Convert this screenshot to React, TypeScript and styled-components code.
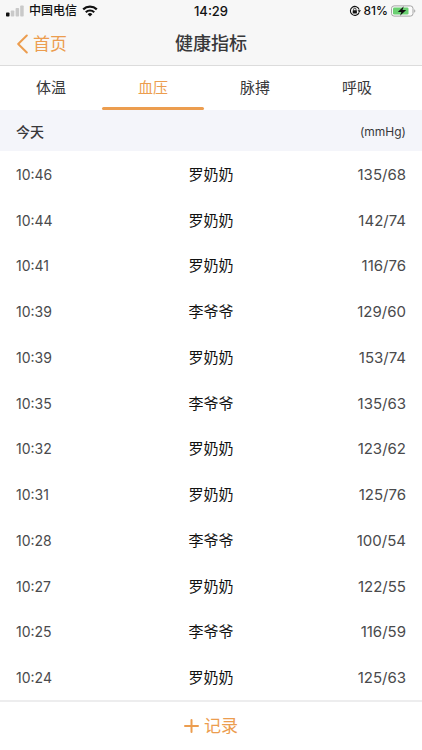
import React from "react";
import styled, { createGlobalStyle } from "styled-components";

const orange = "#ec9d4f";

const GlobalStyle = createGlobalStyle`
  * { box-sizing: border-box; }
  body {
    margin: 0;
    background: #fff;
    color: #38383a;
    font-family: Inter, "Noto Sans CJK SC", sans-serif;
  }
  button { font: inherit; border: 0; background: none; padding: 0; cursor: pointer; }
`;

const Page = styled.main`
  display: flex;
  flex-direction: column;
  min-height: 100vh;
`;

const Header = styled.header`
  background: #f7f7f7;
  border-bottom: 1px solid #dcdcdc;
`;

const StatusBar = styled.div`
  display: grid;
  grid-template-columns: 1fr auto 1fr;
  align-items: center;
  height: 21px;
  padding: 0 6px;
  color: #111;
  font-size: 12px;
  line-height: 20px;
  font-weight: 500;
`;

const StatusGroup = styled.div<{ $end?: boolean }>`
  display: flex;
  align-items: center;
  gap: ${(p) => (p.$end ? 3 : 5)}px;
  justify-content: ${(p) => (p.$end ? "flex-end" : "flex-start")};
`;

const Clock = styled.time`
  font-size: 13px;
`;

const NavBar = styled.nav`
  display: grid;
  grid-template-columns: 1fr auto 1fr;
  align-items: center;
  height: 44px;
  padding: 2px 16px 0;
`;

const BackLink = styled.a`
  display: flex;
  align-items: center;
  gap: 5px;
  color: ${orange};
  font-size: 17px;
  line-height: 24px;
  text-decoration: none;
`;

const Title = styled.h1`
  margin: 0;
  font-size: 18px;
  line-height: 24px;
  font-weight: 500;
`;

const Tabs = styled.div`
  display: grid;
  grid-template-columns: repeat(4, 1fr);
  height: 44px;
  padding-right: 14px;
`;

const Tab = styled.button<{ $active: boolean }>`
  && {
    display: grid;
    grid-template-rows: 1fr 3px;
    align-items: center;
    padding-top: 3px;
    color: ${(p) => (p.$active ? orange : "#38383a")};
    font-size: 15px;
    line-height: 24px;
  }

  &::after {
    content: "";
    height: 3px;
    border-radius: 2px;
    background: ${(p) => (p.$active ? orange : "transparent")};
  }
`;

const Readings = styled.table`
  flex: 1;
  display: grid;
  grid-template-rows: auto 1fr;
`;

const TableHead = styled.thead`
  display: grid;
  background: #f4f5fa;
`;

const TableBody = styled.tbody`
  display: grid;
  grid-auto-rows: 1fr;
`;

const Row = styled.tr`
  display: grid;
  grid-template-columns: 1fr auto 1fr;
  align-items: center;
  min-height: 41px;
  padding: 2px 16px 0;
`;

const DayCell = styled.th`
  padding: 0;
  text-align: left;
  font-size: 14px;
  line-height: 24px;
  font-weight: 500;
`;

const UnitCell = styled.th`
  grid-column: 3;
  padding: 0;
  text-align: right;
  font-size: 12px;
  line-height: 24px;
  font-weight: 400;
`;

const Cell = styled.td<{ $end?: boolean }>`
  padding: 0;
  color: #4a4a4c;
  font-size: ${(p) => (p.$end ? 15 : 14)}px;
  line-height: 24px;
  text-align: ${(p) => (p.$end ? "right" : "left")};
`;

const NameCell = styled.td`
  padding: 0;
  color: #111;
  font-size: 15px;
  line-height: 24px;
`;

const Footer = styled.footer`
  height: 50px;
  border-top: 2px solid #ededee;
`;

const RecordButton = styled.button`
  && {
    display: flex;
    align-items: center;
    justify-content: center;
    gap: 5px;
    width: 100%;
    height: 100%;
    color: ${orange};
    font-size: 17px;
    line-height: 24px;
  }
`;

const SignalIcon = () => (
  <svg width="18" height="12" viewBox="0 0 18 12" aria-hidden="true">
    <rect x="0" y="7.5" width="3.5" height="4" rx="0.8" fill="#111" />
    <rect x="4.8" y="5.5" width="3.5" height="6" rx="0.8" fill="#c9c9c9" />
    <rect x="9.6" y="3" width="3.5" height="8.5" rx="0.8" fill="#c9c9c9" />
    <rect x="14.2" y="0.5" width="3.5" height="11" rx="0.8" fill="#c9c9c9" />
  </svg>
);

const WifiIcon = () => (
  <svg width="16" height="12" viewBox="0 0 16 12" aria-hidden="true">
    <g fill="none" stroke="#111" strokeWidth="2.2">
      <path d="M1.2 4.4A9.8 9.8 0 0 1 14.8 4.4" />
      <path d="M3.8 7.2A6 6 0 0 1 12.2 7.2" />
    </g>
    <path d="M8 11.6L5.6 9.2A3.5 3.5 0 0 1 10.4 9.2Z" fill="#111" />
  </svg>
);

const RotationLockIcon = () => (
  <svg width="12" height="12" viewBox="0 0 12 12" aria-hidden="true">
    <path d="M10.1 7.5A4.5 4.5 0 1 1 10.2 4.6" fill="none" stroke="#111" strokeWidth="1.1" />
    <path d="M8.5 5.2H12L10.3 7.4Z" fill="#111" />
    <rect x="3.7" y="5.2" width="4.2" height="3.3" rx="0.5" fill="#111" />
    <path d="M4.6 5.4V4.3a1.2 1.2 0 0 1 2.4 0v1.1" fill="none" stroke="#111" strokeWidth="0.8" />
  </svg>
);

const BatteryIcon = () => (
  <svg width="25" height="12" viewBox="0 0 25 12" aria-hidden="true">
    <rect x="0.5" y="0.9" width="21.5" height="10.2" rx="2.6" fill="#fafafa" stroke="#a5a5a5" />
    <rect x="2" y="2.4" width="15.5" height="7.2" rx="1.4" fill="#6bd072" />
    <path d="M23.2 4.2c1.5.6 1.5 3 0 3.6z" fill="#a5a5a5" />
    <path d="M12.8 1.2L6.8 6.9h3.6L9 10.8L15.2 5.1h-3.7z" fill="#111" />
  </svg>
);

const BackIcon = () => (
  <svg width="12" height="20" viewBox="0 0 12 20" aria-hidden="true">
    <path d="M10.8 1.5L2.2 10L10.8 18.5" fill="none" stroke={orange} strokeWidth="2" strokeLinecap="round" strokeLinejoin="round" />
  </svg>
);

const PlusIcon = () => (
  <svg width="15" height="14" viewBox="0 0 15 14" aria-hidden="true">
    <path d="M7.5 1V13M1 7H14" stroke={orange} strokeWidth="2" strokeLinecap="round" />
  </svg>
);

const tabs = ["体温", "血压", "脉搏", "呼吸"];

const readings = [
  ["10:46", "罗奶奶", "135/68"],
  ["10:44", "罗奶奶", "142/74"],
  ["10:41", "罗奶奶", "116/76"],
  ["10:39", "李爷爷", "129/60"],
  ["10:39", "罗奶奶", "153/74"],
  ["10:35", "李爷爷", "135/63"],
  ["10:32", "罗奶奶", "123/62"],
  ["10:31", "罗奶奶", "125/76"],
  ["10:28", "李爷爷", "100/54"],
  ["10:27", "罗奶奶", "122/55"],
  ["10:25", "李爷爷", "116/59"],
  ["10:24", "罗奶奶", "125/63"],
];

export default function App() {
  const [active, setActive] = React.useState("血压");
  return (
    <Page>
      <GlobalStyle />
      <Header>
        <StatusBar>
          <StatusGroup>
            <SignalIcon />
            <span>中国电信</span>
            <WifiIcon />
          </StatusGroup>
          <Clock>14:29</Clock>
          <StatusGroup $end>
            <RotationLockIcon />
            <span>81%</span>
            <BatteryIcon />
          </StatusGroup>
        </StatusBar>
        <NavBar>
          <BackLink href="#home">
            <BackIcon />
            首页
          </BackLink>
          <Title>健康指标</Title>
        </NavBar>
      </Header>
      <Tabs role="tablist">
        {tabs.map((name) => (
          <Tab
            key={name}
            type="button"
            role="tab"
            aria-selected={name === active}
            $active={name === active}
            onClick={() => setActive(name)}
          >
            {name}
          </Tab>
        ))}
      </Tabs>
      <Readings>
        <TableHead>
          <Row>
            <DayCell scope="col">今天</DayCell>
            <UnitCell scope="col">(mmHg)</UnitCell>
          </Row>
        </TableHead>
        <TableBody>
          {readings.map(([time, name, value]) => (
            <Row key={time + name}>
              <Cell>{time}</Cell>
              <NameCell>{name}</NameCell>
              <Cell $end>{value}</Cell>
            </Row>
          ))}
        </TableBody>
      </Readings>
      <Footer>
        <RecordButton type="button">
          <PlusIcon />
          记录
        </RecordButton>
      </Footer>
    </Page>
  );
}
